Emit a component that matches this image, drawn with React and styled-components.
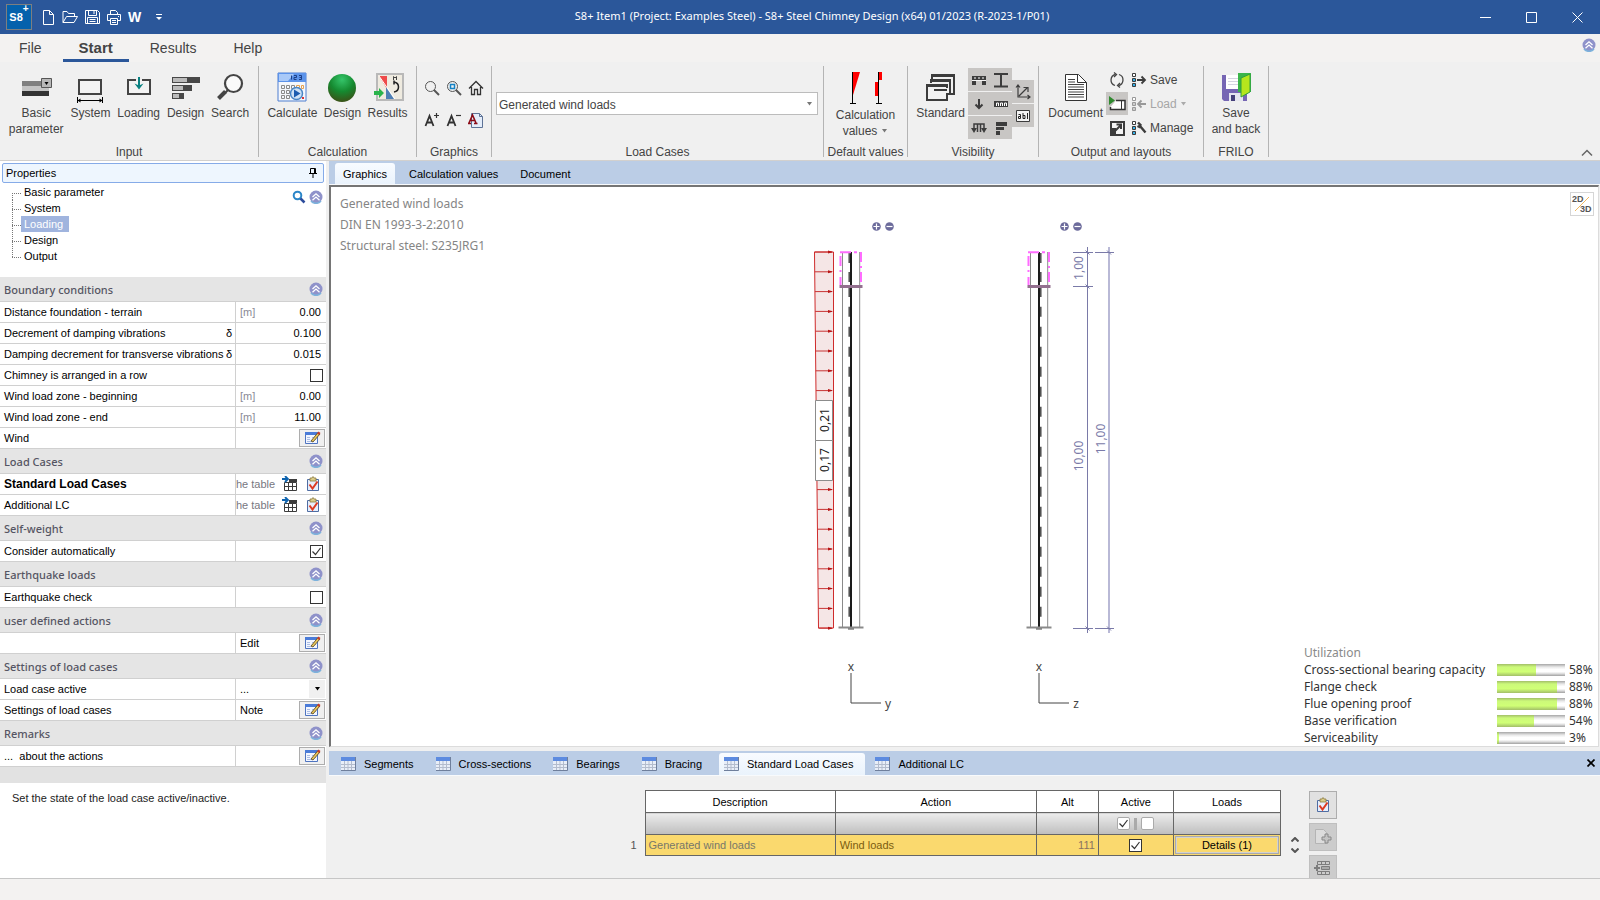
import React, { useState } from 'react';
import styled, { createGlobalStyle, css } from 'styled-components';

const GlobalStyle = createGlobalStyle`
  * {
    box-sizing: border-box;
  }
  body {
    margin: 0;
    background: #f0f0f0;
    color: #000;
    font-family: 'Liberation Sans', Arial, sans-serif;
    font-size: 11px;
  }
  button, input, select {
    font: inherit;
    color: inherit;
    margin: 0;
    padding: 0;
    border: none;
    border-radius: 0;
    background: none;
  }
  svg {
    display: block;
    flex: none;
  }
`;

/* ---------- icons ---------- */

const Svg = ({ w = 16, h = w, children, ...rest }) => (
  <svg width={w} height={h} viewBox={`0 0 ${w} ${h}`} fill='none' aria-hidden='true' {...rest}>
    {children}
  </svg>
);

const PageIcon = () => (
  <Svg stroke='#fff'>
    <path d='M3.5 1.5h6l4 4v10h-10zM9.5 1.5v4h4' />
  </Svg>
);
const FolderIcon = () => (
  <Svg stroke='#fff'>
    <path d='M1 13.5V2.5h4l1.5 2h6v3M1 13.5l3.5-6h11l-3.5 6z' />
  </Svg>
);
const DiskIcon = () => (
  <Svg stroke='#fff'>
    <path d='M1.5 1.5h12l2 2v11h-14zM4.5 1.5v5h8v-5M10 2v3M3.5 14.5v-6h10v6M5.5 10.5h6M5.5 12.5h6' />
  </Svg>
);
const PrinterIcon = () => (
  <Svg stroke='#fff'>
    <path d='M4.5 5.5v-4h5l2 2v2M4.5 11.5h-3v-6h13v6h-3M4.5 9.5h7v6h-7zM6 11.5h4M6 13.5h4M12 7.5h1' />
  </Svg>
);
const MoreIcon = () => (
  <Svg w={8} h={8}>
    <path d='M1 1.5h6' stroke='#fff' />
    <path d='M1 4h6l-3 3z' fill='#fff' />
  </Svg>
);
const ChevronBadge = () => (
  <Svg w={14}>
    <circle cx='7' cy='7' r='6.5' fill='#8f92ca' />
    <path d='M2 11a6.5 6.5 0 0 0 10 0' stroke='#7cb2dc' strokeWidth='1.5' />
    <path d='M3.5 7 7 3.8 10.5 7M3.5 10.3 7 7.1l3.5 3.2' stroke='#fff' strokeWidth='1.3' />
  </Svg>
);

const BasicIcon = () => (
  <Svg w={32}>
    <path d='M2 10h20v6H2z' fill='#808080' />
    <path d='M2 15h27v5H2z' fill='#c4c4c4' />
    <path d='M2 20h27v5H2z' fill='#333' />
    <path d='M21.5 7.5h10v9h-10z' fill='#b8b8b8' stroke='#555' />
    <path d='M24.5 11h4l-2 3z' fill='#000' />
  </Svg>
);
const SystemIcon = () => (
  <Svg w={32}>
    <path d='M5 9h22v14H5z' fill='#f3f3f3' stroke='#444' strokeWidth='2' />
    <path d='M3.5 26v6M28.5 26v6M4 29.5h24' stroke='#000' />
    <path d='m3.5 29.5 3-2v4zM28.5 29.5l-3-2v4z' fill='#000' />
  </Svg>
);
const LoadingIcon = () => (
  <Svg w={32}>
    <path d='M13 9H5v14h22V9h-8' fill='#f3f3f3' stroke='#444' strokeWidth='2' />
    <path d='M16 6v10' stroke='#0a8282' strokeWidth='2' />
    <path d='m11.5 12.5 4.5 6 4.5-6-4.5 2z' fill='#0a8282' />
  </Svg>
);
const BarsIcon = () => (
  <Svg w={32}>
    <path d='M2 6h28v6H2zM2 14h20v6H2zM2 22h12v6H2z' fill='#484848' />
    <path d='M3 7h14v4H3zM3 15h10v4H3zM3 23h6v4H3z' fill='#bbb' />
  </Svg>
);
const SearchIcon = () => (
  <Svg w={32}>
    <circle cx='19.5' cy='12.5' r='8.5' fill='#fafafa' stroke='#444' strokeWidth='2.2' />
    <path d='m14 19-3 3' stroke='#444' strokeWidth='2' />
    <path d='m11.5 20.5-7 7' stroke='#444' strokeWidth='4' />
  </Svg>
);
const CalculateIcon = () => (
  <Svg w={32}>
    <path d='M2 2h28v28H2z' fill='#f4f7fc' stroke='#4f7fd0' />
    <path d='M2 2h28v9H2z' fill='#5c93ea' />
    <path d='M3 3h15l-6 7H3z' fill='#a9c9f8' />
    <path d='M15.5 4.5v4M18 4.5h2.5v2H18v2h2.5M23 4.5h2.5v4H23M23.5 6.5h2' stroke='#1d3f86' />
    <path d='M5.5 14.5h3v3h-3zM10.5 14.5h3v3h-3zM15.5 14.5h3v3h-3zM5.5 19.5h3v3h-3zM10.5 19.5h3v3h-3zM5.5 24.5h3v3h-3zM10.5 24.5h3v3h-3z' stroke='#8a8a8a' />
    <path d='M20.5 14.5h3v2h-3zM25.5 14.5h2v3h-2z' stroke='#e8a14c' />
    <path d='M26 26h2v2h-2z' fill='#d33' />
    <circle cx='20.5' cy='22.5' r='6' fill='#cfe2f6' stroke='#4a86c6' strokeWidth='1.5' />
    <path d='m18 18.5 6.5 4-6.5 4z' fill='#1c5cb0' />
  </Svg>
);
const BallIcon = () => (
  <Svg w={32}>
    <defs>
      <radialGradient id='ball' cx='0.5' cy='0.2' r='0.85'>
        <stop offset='0' stopColor='#35c56a' />
        <stop offset='0.5' stopColor='#158a30' />
        <stop offset='1' stopColor='#3f4a14' />
      </radialGradient>
    </defs>
    <circle cx='16' cy='17' r='14' fill='url(#ball)' />
  </Svg>
);
const ResultsIcon = () => (
  <Svg w={32}>
    <path d='M5 3h26v26H5z' fill='#efebe0' stroke='#b9b9b9' strokeWidth='2' />
    <path d='M7 5h8v13z' fill='#ee4b4b' />
    <path d='M14 16v12h8z' fill='#4e7fb5' />
    <path d='M7 5l16 23' stroke='#fff' />
    <path d='M21.5 9V5.5L23 7l1.5-1.5V9' stroke='#444' />
    <path d='M22 11c6 1 6 9 0 10M22 9.5v4' stroke='#222' strokeWidth='1.5' />
    <path d='M2 20h5v-3l5 5-5 5v-3H2z' fill='#2ab34b' />
  </Svg>
);

const LensIcon = () => (
  <Svg stroke='#555'>
    <circle cx='6.5' cy='6.5' r='5' />
    <path d='m10 10 5 5' strokeWidth='2' />
  </Svg>
);
const LensFitIcon = () => (
  <Svg stroke='#555'>
    <circle cx='6.5' cy='6.5' r='5' />
    <path d='m10 10 5 5' strokeWidth='2' />
    <path d='M4.5 4.5h4v4h-4z' stroke='#1582c5' strokeWidth='1.5' />
  </Svg>
);
const HomeIcon = () => (
  <Svg stroke='#333' strokeWidth='1.3'>
    <path d='m1 8.5 7-7 7 7M3.5 7v7.5h3v-5h3v5h3V7' />
  </Svg>
);
const FontIcon = ({ minus }) => (
  <Svg stroke='#333' strokeWidth='1.8'>
    <path d='m1.5 14 4-10 4 10M3 10.5h5' />
    <path d={minus ? 'M10 3.5h5' : 'M10 3.5h5M12.5 1v5'} strokeWidth='1.2' />
  </Svg>
);
const FontPageIcon = () => (
  <Svg>
    <path d='M3.5 1.5h8l3 3v11h-11z' fill='#e4edfa' stroke='#5d7296' />
    <path d='M11.5 1.5v3h3' stroke='#5d7296' />
    <path d='m1 11 3.5-8L8 11M2.5 8.5h4M0 11.5h3M6 11.5h3.5' stroke='#8c0d18' strokeWidth='1.6' />
  </Svg>
);

const CalcValuesIcon = () => (
  <Svg w={34} h={34}>
    <path d='M3 1h8L4 24z' fill='#f00' />
    <path d='M3.5 1v31M1 32.5h6M29.5 1v31M27 32.5h6' stroke='#000' />
    <path d='M30 1h3v8h-3zM26 11h3v14h-3z' fill='#f00' />
  </Svg>
);
const StandardIcon = () => (
  <Svg w={32} stroke='#3c3c3c' strokeWidth='2'>
    <path d='M7 8V4h22v19h-4M6 5h24' />
    <path d='M2 10h24v20H2z' fill='#f2f2f2' stroke='none' />
    <path d='M6 12V9h19v14h-3M5 10h21M2 14h20v15H2zM2 15h20' />
    <path d='M9 17h14v5H9z' fill='#f2f2f2' stroke='none' />
    <path d='M9 19h13' />
  </Svg>
);
const DocumentIcon = () => (
  <Svg w={32}>
    <path d='M5.5 3.5h13l8 8v18h-21z' fill='#fff' stroke='#333' />
    <path d='M17.5 3.5v8h9' stroke='#333' />
    <path d='M8 13.5h16M8 16h16M8 18.5h16M8 21h16M8 23.5h16M8 26h16M8 8.5h7M8 11h7' stroke='#444' />
  </Svg>
);
const SaveBackIcon = () => (
  <Svg w={32}>
    <path d='M2 4h25v26H4l-2-2z' fill='#7666b4' />
    <path d='M6 4h15v14H6z' fill='#fff' />
    <path d='M8 7.5h11M8 10.5h11M8 13.5h11' stroke='#d5d5e2' />
    <path d='M9 22h14v8H9z' fill='#e6e6f0' />
    <path d='M11 24h4v6h-4z' fill='#46407a' />
    <path d='M18 2h13v19H18z' fill='#3bb54a' />
    <path d='M21 7l9-4v18l-9 5z' fill='#b5e61d' stroke='#2f9e3e' />
  </Svg>
);

const visibilityShapes = {
  supports: (
    <>
      <path d='M1 4h14v4H1z' fill='#3c3c3c' />
      <path d='M3 6h2M7 6h2M11 6h2' stroke='#fff' />
      <path d='M1 9h4v4H1zM11 9h4v4h-4z' fill='#3c3c3c' />
      <path d='M1 8.5h14' stroke='#f4f4f4' />
    </>
  ),
  section: <path d='M1 2h14M1 14.5h14M8 2v12' stroke='#3c3c3c' strokeWidth='2' />,
  arrow: <path d='M8 3v8M4.5 8.5 8 12l3.5-3.5' stroke='#3c3c3c' strokeWidth='2' />,
  ruler: (
    <>
      <path d='M1 5h14v6H1z' fill='#3c3c3c' />
      <path d='M3.5 10V7h2v3M7.5 10V7h2v3M11.5 10V7h2v3' stroke='#fff' />
    </>
  ),
  loads: (
    <>
      <path d='M3 9V4h10v5M6.5 4v8M9.5 4v8' stroke='#3c3c3c' strokeWidth='1.5' />
      <path d='M0 8h6l-3 5zM10 8h6l-3 5z' fill='#3c3c3c' />
    </>
  ),
  bars: <path d='M3 2h11v4H3zM3 7h8v3H3zM3 11h4v4H3z' fill='#3c3c3c' />,
  axes: (
    <path d='M3 1v12h12M1 3.5 3 1l2 2.5M12.5 11l2.5 2-2.5 2M4 12l8-8M8.5 3.5H13V8' stroke='#3c3c3c' strokeWidth='1.2' />
  ),
  text: (
    <>
      <path d='M1.5 2.5h13v11h-13z' fill='#f4f4f4' stroke='#3c3c3c' />
      <path d='M3.5 6.5h2v4h-2v-2h2M8 5v5.5h2v-3H8M12.5 5v6' stroke='#222' />
    </>
  ),
};

const RefreshIcon = () => (
  <Svg stroke='#444' strokeWidth='1.3'>
    <path d='M6 13.5A5.7 5.7 0 0 1 6.5 2.5M10 2.5A5.7 5.7 0 0 1 9.5 13.5' />
    <path d='M5 .5 7.5 2.5 5 5M11 11 8.5 13.5 11 15.5' />
  </Svg>
);
const PlayFrameIcon = () => (
  <Svg w={18} h={16}>
    <path d='M8 4.5h9v9H2.5V11' fill='#fff' stroke='#333' strokeWidth='1.5' />
    <path d='M13.5 5v8' stroke='#333' />
    <path d='M1 0v9l6-4.5z' fill='#2f8a2f' />
  </Svg>
);
const ExpandIcon = () => (
  <Svg>
    <path d='M2 2h13v13H2z' stroke='#3c3c3c' strokeWidth='2' fill='#f4f4f4' />
    <path d='M1 8h6v7H1z' fill='#3c3c3c' />
    <path d='m6.5 10.5 5-5M7.5 4.5H12V9' stroke='#3c3c3c' strokeWidth='2' />
  </Svg>
);
const LayoutIcon = ({ kind }) => {
  const ink = kind === 'load' ? '#999' : '#3c3c3c';
  const fill = kind === 'load' ? '#ccc' : '#36b0e8';
  return (
    <Svg stroke={ink}>
      <path d='M1.5 1.5h3v3h-3z' fill='#fff' />
      <path d='M1.5 6.5h3v3h-3zM1.5 11.5h3v3h-3z' fill={fill} />
      {kind === 'save' && <path d='M6 8h8M10.5 4.5 14 8l-3.5 3.5' strokeWidth='1.8' />}
      {kind === 'load' && <path d='M15 8H7M10.5 4.5 7 8l3.5 3.5' strokeWidth='1.8' />}
      {kind === 'manage' && <path d='M7 2.5 9.5 5 8.5 7 6.5 6M9 6l5.5 6.5' strokeWidth='2.4' />}
    </Svg>
  );
};

const PinIcon = () => (
  <Svg w={10} h={10} stroke='#000'>
    <path d='M2.5 5.5v-5h5v5M6.5 1v4M1 5.5h8M5 6v4' />
  </Svg>
);
const BlueLensIcon = () => (
  <Svg w={14}>
    <circle cx='5.5' cy='5.5' r='3.8' stroke='#2b86c8' strokeWidth='2' />
    <path d='m8.5 8.5 4 4' stroke='#2c4c9c' strokeWidth='2.5' />
  </Svg>
);
const EditIcon = () => (
  <Svg w={18} h={14}>
    <path d='M2.5 1.5h12v11h-12z' fill='#f2f6ff' stroke='#4f74c0' />
    <path d='M2 1h13v3H2z' fill='#4a7bd8' />
    <path d='M4 6.5h3M4 8.5h3M4 10.5h6M9 6.5h4M9 8.5h4' stroke='#a9bce4' />
    <path d='m8 10 7-8.5 2 1.5-7 8z' fill='#e9c65a' stroke='#50401c' strokeWidth='0.8' />
    <path d='m14 2.5 1.5-2 2 1.5-1.5 2z' fill='#c33d2c' />
  </Svg>
);
const ToTableIcon = () => (
  <Svg>
    <path d='M7 3h8v3H7z' fill='#3c3c3c' />
    <path d='M2.5 6.5h12v8h-12zM2.5 10.5h12M6.5 6.5v8M10.5 6.5v8' stroke='#3c3c3c' />
    <path d='M0 3h5M3 0l3 3-3 3' stroke='#0c62ae' strokeWidth='1.8' />
  </Svg>
);
const ClipboardIcon = () => (
  <Svg>
    <path d='M2.5 3.5h11v11h-11z' fill='#e7eefb' stroke='#4f6da3' />
    <path d='M5 2h2l1-1.5L9 2h2v3H5z' fill='#d9ca87' stroke='#8c7a3c' strokeWidth='0.8' />
    <path d='m4.5 8.5 3 4 5-7' stroke='#dc3a22' strokeWidth='2' />
  </Svg>
);
const AddPageIcon = () => (
  <Svg w={18}>
    <path d='M1.5 1.5h8l3 3v11h-11z' fill='#dcdcdc' stroke='#b4b4b4' />
    <path d='M11 6h3v3h3v3h-3v3h-3v-3H8V9h3z' fill='#c4c4c4' stroke='#888' />
  </Svg>
);
const AddRowIcon = () => (
  <Svg w={18} stroke='#7d7d7d'>
    <path d='M3.5 1.5h12v3h-12zM7.5 1.5v3M11.5 1.5v3M3.5 11.5h12v3h-12zM7.5 11.5v3M11.5 11.5v3' />
    <path d='M7.5 6.5h8v3h-8z' fill='#aaa' />
    <path d='M0 8h6M3 5v6' strokeWidth='2' />
  </Svg>
);
const GridIcon = () => (
  <Svg w={15}>
    <path d='M0 1h14v13H0z' fill='#e8eef8' />
    <path d='M0 1h14v4H0z' fill='#5d8be0' />
    <path d='M0 8.5h14M0 11.5h14M3.5 5v9M7 5v9M10.5 5v9' stroke='#b3bccd' />
    <path d='M14.5 1v13.5H0' stroke='#6f7f9c' />
  </Svg>
);
const CaretDown = ({ color = '#777' }) => (
  <Svg w={7} h={4}>
    <path d='M1 0h5L3.5 3.5z' fill={color} />
  </Svg>
);

/* ---------- drawing of the chimney ---------- */

const arrows = Array.from({ length: 20 }, (_, i) => 252 + i * 19.8);
const dashes = [253, 272, 287, ...Array.from({ length: 16 }, (_, i) => 306.7 + i * 20)];

const Chimney = ({ x, side, axis }) => (
  <g transform={`translate(${x} 0)`}>
    <path d='M-8.5 252V627M8.7 252V627' stroke='#8a8a8a' />
    <path d='M0 252V628' stroke='#1c1c1c' strokeWidth='2' />
    {dashes.map((y) => (
      <path key={y} d={`M${side * 1.8} ${y}v10`} stroke='#4a4a4a' strokeWidth='1.5' />
    ))}
    <path d='M-11 252.3h11M3 252.3h3M-10.5 256v10M-10.5 270v2M-10.5 277v8M10 252v10M10 266v2M10 272v10' stroke='#ff6cff' strokeWidth='2' />
    <path d='M-11.5 286.5h23' stroke='#93708f' strokeWidth='3' />
    <path d='M-12.5 627.5h25' stroke='#8a8a8a' strokeWidth='2' />
    <path d='M-3 629h6' stroke='#444' />
    <path d='M0 673v30h30' stroke='#444' />
    <text x='0' y='671' textAnchor='middle' fill='#444'>x</text>
    <text x='37' y='708' textAnchor='middle' fill='#444'>{axis}</text>
    <circle cx='25.5' cy='226.5' r='4.3' fill='#6c6b9b' />
    <path d='M22.5 226.5h6M25.5 223.5v6' stroke='#fff' strokeWidth='1.2' />
    <circle cx='38.5' cy='226.5' r='4.3' fill='#6c6b9b' />
    <path d='M35.5 226.5h6' stroke='#fff' strokeWidth='1.2' />
  </g>
);

const SideText = ({ x, y, fill, children }) => (
  <text transform={`translate(${x} ${y}) rotate(-90)`} textAnchor='middle' fill={fill}>
    {children}
  </text>
);

const ChimneyDrawing = () => (
  <Drawing viewBox='799 187 331 559' role='img' aria-label='Chimney elevation with wind load'>
    <path d='M814.5 252h19v376h-15z' fill='#f5e6e6' stroke='#cf2c2c' />
    {arrows.map((y) => (
      <g key={y}>
        <path d={`M${814.5 + (y - 252) / 94} ${y}H832`} stroke='#c83232' />
        <path d={`M828 ${y - 1.5}l5 1.5-5 1.5z`} fill='#b81414' />
      </g>
    ))}
    <path d='M815.5 400.5h17v40h-17zM815.5 440.5h17v40h-17z' fill='#fff' stroke='#8c8c8c' />
    <SideText x={829} y={420} fill='#222'>0,21</SideText>
    <SideText x={829} y={460} fill='#222'>0,17</SideText>
    <Chimney x={851} side={-1} axis='y' />
    <Chimney x={1039} side={1} axis='z' />
    <path d='M1109 247v386' stroke='#b9b9d6' strokeWidth='2' />
    <path
      d='M1087.5 247v386M1073 252.5h20M1073 286.5h20M1073 628.5h20M1095 252.5h19M1095 628.5h19M1085.5 250.5l4 4M1085.5 284.5l4 4M1085.5 626.5l4 4M1107 250.5l4 4M1107 626.5l4 4'
      stroke='#7a7aa8'
    />
    <SideText x={1083} y={268} fill='#7a7aa8'>1,00</SideText>
    <SideText x={1083} y={456} fill='#7a7aa8'>10,00</SideText>
    <SideText x={1105} y={439} fill='#7a7aa8'>11,00</SideText>
  </Drawing>
);

/* ---------- data ---------- */

const sections = [
  {
    title: 'Boundary conditions',
    rows: [
      { label: 'Distance foundation - terrain', unit: '[m]', value: '0.00' },
      { label: 'Decrement of damping vibrations', symbol: 'δ', value: '0.100' },
      { label: 'Damping decrement for transverse vibrations', symbol: 'δ', value: '0.015' },
      { label: 'Chimney is arranged in a row', type: 'check' },
      { label: 'Wind load zone - beginning', unit: '[m]', value: '0.00' },
      { label: 'Wind load zone - end', unit: '[m]', value: '11.00' },
      { label: 'Wind', type: 'edit' },
    ],
  },
  {
    title: 'Load Cases',
    rows: [
      { label: 'Standard Load Cases', type: 'table', strong: true },
      { label: 'Additional LC', type: 'table' },
    ],
  },
  { title: 'Self-weight', rows: [{ label: 'Consider automatically', type: 'check', checked: true }] },
  { title: 'Earthquake loads', rows: [{ label: 'Earthquake check', type: 'check' }] },
  { title: 'user defined actions', rows: [{ label: '', type: 'edit', text: 'Edit' }] },
  {
    title: 'Settings of load cases',
    rows: [
      { label: 'Load case active', type: 'select' },
      { label: 'Settings of load cases', type: 'edit', text: 'Note' },
    ],
  },
  { title: 'Remarks', rows: [{ label: '...  about the actions', type: 'edit' }] },
];

const tree = ['Basic parameter', 'System', 'Loading', 'Design', 'Output'];

const utilization = [
  { name: 'Cross-sectional bearing capacity', value: 58 },
  { name: 'Flange check', value: 88 },
  { name: 'Flue opening proof', value: 88 },
  { name: 'Base verification', value: 54 },
  { name: 'Serviceability', value: 3 },
];

const tableTabs = ['Segments', 'Cross-sections', 'Bearings', 'Bracing', 'Standard Load Cases', 'Additional LC'];

/* ---------- components ---------- */

const Tool = ({ icon, children }) => (
  <ToolButton type='button'>
    {icon}
    <span>{children}</span>
  </ToolButton>
);

const Ribbon = () => (
  <RibbonBar>
    <Group $width={259}>
      <Tools>
        <Tool icon={<BasicIcon />}>Basic<br />parameter</Tool>
        <Tool icon={<SystemIcon />}>System</Tool>
        <Tool icon={<LoadingIcon />}>Loading</Tool>
        <Tool icon={<BarsIcon />}>Design</Tool>
        <Tool icon={<SearchIcon />}>Search</Tool>
      </Tools>
      <GroupName>Input</GroupName>
    </Group>
    <Group $width={158}>
      <Tools>
        <Tool icon={<CalculateIcon />}>Calculate</Tool>
        <Tool icon={<BallIcon />}>Design</Tool>
        <Tool icon={<ResultsIcon />}>Results</Tool>
      </Tools>
      <GroupName>Calculation</GroupName>
    </Group>
    <Group $width={75}>
      <SmallTools>
        <IconButton type='button' aria-label='Zoom'><LensIcon /></IconButton>
        <IconButton type='button' aria-label='Zoom to window'><LensFitIcon /></IconButton>
        <IconButton type='button' aria-label='Full view'><HomeIcon /></IconButton>
        <IconButton type='button' aria-label='Larger font'><FontIcon /></IconButton>
        <IconButton type='button' aria-label='Smaller font'><FontIcon minus /></IconButton>
        <IconButton type='button' aria-label='Font settings'><FontPageIcon /></IconButton>
      </SmallTools>
      <GroupName>Graphics</GroupName>
    </Group>
    <Group $width={332}>
      <SelectBox>
        <select aria-label='Load case' defaultValue='wind'>
          <option value='wind'>Generated wind loads</option>
        </select>
        <CaretDown />
      </SelectBox>
      <GroupName>Load Cases</GroupName>
    </Group>
    <Group $width={84}>
      <Tools>
        <Tool icon={<CalcValuesIcon />}>
          Calculation
          <Caption>values <CaretDown /></Caption>
        </Tool>
      </Tools>
      <GroupName>Default values</GroupName>
    </Group>
    <Group $width={131}>
      <Tools $flush>
        <Tool icon={<StandardIcon />}>Standard</Tool>
        <Toggles>
          {[['supports', 'arrow', 'loads'], ['section', 'ruler', 'bars'], ['axes', 'text']].map((column) => (
            <ToggleColumn key={column[0]}>
              {column.map((name) => (
                <Toggle key={name} type='button' aria-label={`Show ${name}`} aria-pressed='true'>
                  <Svg>{visibilityShapes[name]}</Svg>
                </Toggle>
              ))}
            </ToggleColumn>
          ))}
        </Toggles>
      </Tools>
      <GroupName>Visibility</GroupName>
    </Group>
    <Group $width={165}>
      <Tools $flush>
        <Tool icon={<DocumentIcon />}>Document</Tool>
        <OutputGrid>
          <IconButton type='button' aria-label='Refresh'><RefreshIcon /></IconButton>
          <LayoutButton type='button'><LayoutIcon kind='save' />Save</LayoutButton>
          <Toggle type='button' aria-label='Preview' aria-pressed='true'><PlayFrameIcon /></Toggle>
          <LayoutButton type='button' disabled><LayoutIcon kind='load' />Load <CaretDown color='#aaa' /></LayoutButton>
          <IconButton type='button' aria-label='Expand'><ExpandIcon /></IconButton>
          <LayoutButton type='button'><LayoutIcon kind='manage' />Manage</LayoutButton>
        </OutputGrid>
      </Tools>
      <GroupName>Output and layouts</GroupName>
    </Group>
    <Group $width={65}>
      <Tools>
        <Tool icon={<SaveBackIcon />}>Save<br />and back</Tool>
      </Tools>
      <GroupName>FRILO</GroupName>
    </Group>
    <CollapseButton type='button' aria-label='Collapse ribbon'>
      <Svg w={12} h={8} stroke='#666' strokeWidth='1.5'><path d='m1 6.5 5-5 5 5' /></Svg>
    </CollapseButton>
  </RibbonBar>
);

const RowControl = ({ row, id }) => {
  const [checked, setChecked] = useState(!!row.checked);
  if (row.type === 'check') {
    return <Check id={id} type='checkbox' checked={checked} onChange={() => setChecked(!checked)} />;
  }
  if (row.type === 'edit') {
    return (
      <>
        <Text>{row.text}</Text>
        <EditButton id={id} type='button' aria-label={`Edit ${row.label}`}><EditIcon /></EditButton>
      </>
    );
  }
  if (row.type === 'table') {
    return (
      <>
        <TableHint>he table</TableHint>
        <RowIcon id={id} type='button' aria-label='Go to table'><ToTableIcon /></RowIcon>
        <RowIcon type='button' aria-label='Check entries'><ClipboardIcon /></RowIcon>
      </>
    );
  }
  if (row.type === 'select') {
    return (
      <PlainSelect>
        <select id={id}><option>...</option></select>
        <span><CaretDown color='#000' /></span>
      </PlainSelect>
    );
  }
  return (
    <>
      <Unit>{row.unit}</Unit>
      <NumberInput id={id} type='text' defaultValue={row.value} />
    </>
  );
};

const Properties = () => (
  <Panel>
    <PanelHead>
      Properties
      <PinIcon />
    </PanelHead>
    <TreeArea>
      <Tree>
        {tree.map((item, i) => (
          <li key={item}>
            <Svg w={9} h={16} stroke='#777' strokeDasharray='1 1'>
              <path d='M0 9.5h9' />
              <path d={`M0.5 ${i === 0 ? 9 : 0}V${i === tree.length - 1 ? 9 : 16}`} />
            </Svg>
            <TreeLink href='#' $active={item === 'Loading'}>{item}</TreeLink>
          </li>
        ))}
      </Tree>
      <TreeTools>
        <BlueLensIcon />
        <ChevronBadge />
      </TreeTools>
    </TreeArea>
    {sections.map((section, s) => (
      <section key={section.title}>
        <SectionHead>
          {section.title}
          <ChevronBadge />
        </SectionHead>
        {section.rows.map((row, r) => (
          <Row key={r}>
            <RowLabel htmlFor={`row-${s}-${r}`} $strong={row.strong}>
              {row.label}
              {row.symbol && <span>{row.symbol}</span>}
            </RowLabel>
            <RowValue>
              <RowControl row={row} id={`row-${s}-${r}`} />
            </RowValue>
          </Row>
        ))}
      </section>
    ))}
    <PanelEnd />
    <Hint>Set the state of the load case active/inactive.</Hint>
  </Panel>
);

const Graphics = () => (
  <Canvas>
    <Notes>
      <p>Generated wind loads</p>
      <p>DIN EN 1993-3-2:2010</p>
      <p>Structural steel: S235JRG1</p>
    </Notes>
    <ChimneyDrawing />
    <CanvasSide>
      <ViewSwitch type='button' aria-label='2D/3D'>
        <Svg w={22} h={22}>
          <path d='M4 18 18 4' stroke='#f0b860' />
          <text x='1' y='9'>2D</text>
          <text x='9' y='19'>3D</text>
        </Svg>
      </ViewSwitch>
      <Utilization>
        <h3>Utilization</h3>
        {utilization.map((item) => (
          <React.Fragment key={item.name}>
            <span>{item.name}</span>
            <Meter>
              <div style={{ width: `${item.value}%` }} />
            </Meter>
            <span>{item.value}%</span>
          </React.Fragment>
        ))}
      </Utilization>
    </CanvasSide>
  </Canvas>
);

const LoadCaseTable = () => {
  const [active, setActive] = useState(true);
  return (
    <TableArea>
      <TableWrap>
        <Table>
          <colgroup>
            <col width='20' />
            <col width='190' />
            <col width='201' />
            <col width='62' />
            <col width='75' />
            <col width='107' />
          </colgroup>
          <thead>
            <tr>
              <td />
              <th>Description</th>
              <th>Action</th>
              <th>Alt</th>
              <th>Active</th>
              <th>Loads</th>
            </tr>
          </thead>
          <tbody>
            <FilterRow>
              <td />
              <td />
              <td />
              <td />
              <td>
                <Filter>
                  <SoftCheck type='checkbox' defaultChecked aria-label='Activate all' />
                  <i />
                  <SoftCheck type='checkbox' aria-label='Deactivate all' />
                </Filter>
              </td>
              <td />
            </FilterRow>
            <DataRow>
              <td>1</td>
              <td>Generated wind loads</td>
              <td>Wind loads</td>
              <td>111</td>
              <td>
                <Check
                  type='checkbox'
                  aria-label='Active'
                  checked={active}
                  onChange={() => setActive(!active)}
                />
              </td>
              <td>
                <DetailsButton type='button'>Details (1)</DetailsButton>
              </td>
            </DataRow>
          </tbody>
        </Table>
        <Spinner>
          <button type='button' aria-label='Previous row'>
            <Svg w={8} h={5} stroke='#555' strokeWidth='2'><path d='m.5 4.5 3.5-3.5 3.5 3.5' /></Svg>
          </button>
          <button type='button' aria-label='Next row'>
            <Svg w={8} h={5} stroke='#555' strokeWidth='2'><path d='m.5 .5 3.5 3.5 3.5-3.5' /></Svg>
          </button>
        </Spinner>
      </TableWrap>
      <TableActions>
        <ActionButton type='button' aria-label='Check entries'><ClipboardIcon /></ActionButton>
        <ActionButton type='button' aria-label='Add' disabled><AddPageIcon /></ActionButton>
        <ActionButton type='button' aria-label='Insert row' disabled><AddRowIcon /></ActionButton>
      </TableActions>
    </TableArea>
  );
};

const App = () => {
  const [view, setView] = useState('Graphics');
  const [tableTab, setTableTab] = useState('Standard Load Cases');
  return (
    <Window>
      <GlobalStyle />
      <TitleBar>
        <QuickAccess>
          <Logo>S8<sup>+</sup></Logo>
          <button type='button' aria-label='New'><PageIcon /></button>
          <button type='button' aria-label='Open'><FolderIcon /></button>
          <button type='button' aria-label='Save'><DiskIcon /></button>
          <button type='button' aria-label='Print'><PrinterIcon /></button>
          <WordButton type='button'>W</WordButton>
          <button type='button' aria-label='Customize'><MoreIcon /></button>
        </QuickAccess>
        <Title>S8+ Item1 (Project: Examples Steel) - S8+ Steel Chimney Design (x64) 01/2023 (R-2023-1/P01)</Title>
        <WindowButton type='button' aria-label='Minimize'>
          <Svg w={11} stroke='#fff'><path d='M0 5.5h11' /></Svg>
        </WindowButton>
        <WindowButton type='button' aria-label='Maximize'>
          <Svg w={11} stroke='#fff'><path d='M.5 .5h10v10H.5z' /></Svg>
        </WindowButton>
        <WindowButton type='button' aria-label='Close'>
          <Svg w={11} stroke='#fff'><path d='m.5 .5 10 10M10.5 .5l-10 10' /></Svg>
        </WindowButton>
      </TitleBar>
      <MenuBar>
        {['File', 'Start', 'Results', 'Help'].map((item) => (
          <MenuTab key={item} type='button' $active={item === 'Start'}>{item}</MenuTab>
        ))}
        <ChevronBadge />
      </MenuBar>
      <Ribbon />
      <Main>
        <Properties />
        <Work>
          <TabStrip>
            {['Graphics', 'Calculation values', 'Document'].map((item) => (
              <Tab key={item} type='button' $active={item === view} onClick={() => setView(item)}>
                {item}
              </Tab>
            ))}
          </TabStrip>
          <Graphics />
          <TabStrip $tables>
            {tableTabs.map((item) => (
              <Tab key={item} type='button' $icon $active={item === tableTab} onClick={() => setTableTab(item)}>
                <GridIcon />
                {item}
              </Tab>
            ))}
            <CloseButton type='button' aria-label='Close'>
              <Svg w={8} h={8} stroke='#000' strokeWidth='1.7'><path d='m.5 .5 7 7M7.5 .5l-7 7' /></Svg>
            </CloseButton>
          </TabStrip>
          <LoadCaseTable />
        </Work>
      </Main>
      <StatusBar />
    </Window>
  );
};

export default App;

/* ---------- styles ---------- */

const uiFont = "'Noto Sans', 'Open Sans', sans-serif";

const Window = styled.div`
  display: flex;
  flex-direction: column;
  height: 100vh;
  overflow: hidden;
`;

const TitleBar = styled.header`
  display: flex;
  align-items: center;
  flex: none;
  height: 34px;
  background: #2b579a;
  color: #fff;
`;

const QuickAccess = styled.div`
  display: flex;
  align-items: center;
  gap: 6px;
  width: 162px;
  padding-left: 6px;
`;

const Logo = styled.div`
  display: flex;
  align-items: center;
  justify-content: center;
  flex: none;
  width: 26px;
  height: 26px;
  margin-right: 2px;
  border: 1px solid #7d7f80;
  background: #0561ac;
  font: bold 11px 'Liberation Sans', Arial, sans-serif;
  sup {
    align-self: flex-start;
    font-size: 10px;
    line-height: 8px;
  }
`;

const WordButton = styled.button`
  font: bold 14px 'Liberation Sans', Arial, sans-serif;
  margin-right: 8px;
`;

const Title = styled.div`
  flex: 1;
  padding-bottom: 3px;
  text-align: center;
  font-family: ${uiFont};
  font-size: 11px;
  white-space: nowrap;
`;

const WindowButton = styled.button`
  display: flex;
  align-items: center;
  justify-content: center;
  width: 46px;
  height: 34px;
`;

const MenuBar = styled.nav`
  display: flex;
  flex: none;
  gap: 5px;
  height: 28px;
  padding: 0 4px 0 3px;
  background: #f3f2f1;
  color: #444;
  svg {
    margin: 4px 0 0 auto;
  }
`;

const MenuTab = styled.button`
  padding: 2px 16px 0;
  border-bottom: 3px solid transparent;
  font-size: 14px;
  ${({ $active }) =>
    $active &&
    css`
      border-color: #2b579a;
      font-size: 15px;
      font-weight: bold;
    `}
`;

const RibbonBar = styled.div`
  display: flex;
  flex: none;
  height: 99px;
  padding: 4px 0 3px;
  border-bottom: 1px solid #d2d0ce;
  background: #f0f0f0;
  color: #444;
  font-size: 12px;
`;

const Group = styled.div`
  display: flex;
  flex-direction: column;
  justify-content: space-between;
  flex: none;
  width: ${({ $width }) => $width}px;
  border-right: 1px solid #b4b4b4;
`;

const GroupName = styled.div`
  text-align: center;
  line-height: 9px;
  white-space: nowrap;
`;

const Tools = styled.div`
  display: flex;
  justify-content: ${({ $flush }) => ($flush ? 'flex-end' : 'space-evenly')};
  gap: ${({ $flush }) => ($flush ? '3px' : '0')};
  padding: ${({ $flush }) => ($flush ? '2px 4px 0 0' : '2px 2px 0')};
`;

const ToolButton = styled.button`
  display: flex;
  flex-direction: column;
  align-items: center;
  align-self: flex-start;
  gap: 2px;
  padding-top: 3px;
  line-height: 16px;
  text-align: center;
`;

const Caption = styled.span`
  display: flex;
  align-items: center;
  justify-content: center;
  gap: 4px;
`;

const SmallTools = styled.div`
  display: grid;
  grid-template-columns: repeat(3, 22px);
  justify-content: center;
  grid-auto-rows: 32px;
  padding-top: 6px;
`;

const IconButton = styled.button`
  display: flex;
  align-items: center;
  justify-content: center;
  min-width: 22px;
`;

const SelectBox = styled.div`
  display: flex;
  align-items: center;
  height: 23px;
  margin: 26px 5px 0 4px;
  padding-right: 4px;
  border: 1px solid #bcbcbc;
  background: #fff;
  select {
    flex: 1;
    padding: 2px 0 0 2px;
    appearance: none;
    outline: none;
  }
`;

const Toggles = styled.div`
  display: flex;
  align-items: center;
`;

const ToggleColumn = styled.div`
  display: flex;
  flex-direction: column;
  gap: 1px;
`;

const Toggle = styled.button`
  display: flex;
  align-items: center;
  justify-content: center;
  width: 22px;
  height: 23px;
  background: #c8c6c4;
`;

const OutputGrid = styled.div`
  display: grid;
  grid-template-columns: 22px 68px;
  grid-auto-rows: 23px;
  column-gap: 3px;
  row-gap: 1px;
`;

const LayoutButton = styled.button`
  display: flex;
  align-items: center;
  gap: 3px;
  &:disabled {
    color: #a6a6a6;
  }
`;

const CollapseButton = styled.button`
  align-self: flex-end;
  margin-left: auto;
  padding: 0 7px 0 0;
`;

const Main = styled.div`
  display: flex;
  flex: 1;
  min-height: 0;
`;

const Panel = styled.aside`
  display: flex;
  flex-direction: column;
  flex: none;
  width: 326px;
  background: #fff;
`;

const PanelHead = styled.div`
  display: flex;
  align-items: center;
  justify-content: space-between;
  height: 20px;
  margin: 2px 2px 0;
  padding: 0 5px 0 3px;
  border: 1px solid #86abe8;
  border-radius: 2px;
  background: #eef6fe;
`;

const TreeArea = styled.div`
  display: flex;
  justify-content: space-between;
  align-items: flex-start;
  height: 94px;
  padding: 1px 3px 0 12px;
`;

const Tree = styled.ul`
  margin: 0;
  padding: 0;
  list-style: none;
  li {
    display: flex;
    height: 16px;
  }
`;

const TreeLink = styled.a`
  padding: 0 6px 0 3px;
  color: ${({ $active }) => ($active ? '#fff' : '#000')};
  background: ${({ $active }) => ($active ? '#a0b4de' : 'none')};
  font-size: 11px;
  line-height: 16px;
  text-decoration: none;
`;

const TreeTools = styled.div`
  display: flex;
  align-items: center;
  gap: 3px;
  padding-top: 6px;
`;

const SectionHead = styled.h2`
  display: flex;
  align-items: center;
  justify-content: space-between;
  height: 25px;
  margin: 0;
  padding: 0 3px 0 4px;
  border-bottom: 1px solid #d0d0d0;
  background: #e5e5e5;
  color: #555563;
  font-family: ${uiFont};
  font-size: 11px;
  font-weight: 500;
`;

const Row = styled.div`
  display: grid;
  grid-template-columns: minmax(0, 1fr) 91px;
  height: 21px;
  border-bottom: 1px solid #d0d0d0;
`;

const RowLabel = styled.label`
  display: flex;
  align-items: center;
  justify-content: space-between;
  padding: 0 3px 0 4px;
  white-space: pre;
  ${({ $strong }) =>
    $strong &&
    css`
      font-size: 12px;
      font-weight: bold;
    `}
`;

const RowValue = styled.div`
  display: flex;
  align-items: center;
  justify-content: flex-end;
  border-left: 1px solid #d0d0d0;
  min-width: 0;
`;

const Unit = styled.span`
  flex: 1;
  padding-left: 4px;
  color: #8a8a96;
`;

const NumberInput = styled.input`
  width: 60px;
  padding-right: 5px;
  text-align: right;
  outline: none;
`;

const Check = styled.input`
  appearance: none;
  width: 13px;
  height: 13px;
  margin-right: 3px;
  border: 1px solid #333;
  background: #fff;
  &:checked {
    background: #fff
      url("data:image/svg+xml,%3Csvg xmlns='http://www.w3.org/2000/svg' viewBox='0 0 11 11'%3E%3Cpath d='M1.5 5.5l3 3 5-6.5' fill='none' stroke='%23333' stroke-width='1.2'/%3E%3C/svg%3E");
  }
`;

const Text = styled.span`
  flex: 1;
  padding-left: 4px;
`;

const EditButton = styled.button`
  display: flex;
  align-items: center;
  justify-content: center;
  width: 26px;
  height: 18px;
  margin-right: 1px;
  border: 1px solid #adadad;
  background: #f0f0f0;
`;

const TableHint = styled.span`
  flex: 1;
  color: #77777f;
  white-space: nowrap;
`;

const RowIcon = styled.button`
  margin-right: 5px;
  & + & {
    margin-left: 2px;
  }
`;

const PlainSelect = styled.div`
  display: flex;
  flex: 1;
  height: 18px;
  padding: 0 1px 0 4px;
  select {
    flex: 1;
    appearance: none;
    outline: none;
  }
  span {
    display: flex;
    align-items: center;
    justify-content: center;
    width: 16px;
    background: #f0f0f0;
  }
`;

const PanelEnd = styled.div`
  height: 16px;
  background: #e2e2e2;
`;

const Hint = styled.p`
  margin: 0;
  padding: 8px 12px;
  line-height: 14px;
  color: #222;
`;

const Work = styled.main`
  display: flex;
  flex-direction: column;
  flex: 1;
  min-width: 0;
  margin-left: 3px;
`;

const TabStrip = styled.div`
  display: flex;
  align-items: flex-end;
  flex: none;
  gap: ${({ $tables }) => ($tables ? 5 : 6)}px;
  height: ${({ $tables }) => ($tables ? 25 : 24)}px;
  padding: 0 5px 0 ${({ $tables }) => ($tables ? 7 : 6)}px;
  border-bottom: 1px solid #f8fafc;
  background: #bbcde6;
`;

const Tab = styled.button`
  display: flex;
  align-items: center;
  gap: 8px;
  height: ${({ $icon }) => ($icon ? 22 : 21)}px;
  padding: ${({ $icon }) => ($icon ? '0 12px 1px 5px' : '0 8px')};
  border-radius: 3px 3px 0 0;
  background: ${({ $active }) => ($active ? 'linear-gradient(#f8fbff, #eaf3fc)' : 'none')};
  white-space: nowrap;
`;

const CloseButton = styled.button`
  align-self: center;
  margin-left: auto;
`;

const Canvas = styled.section`
  display: grid;
  grid-template-columns: 1fr 331px 1fr;
  flex: 1;
  min-height: 0;
  margin: 0 1px 4px 0;
  border-top: 2px solid #757575;
  border-left: 2px solid #757575;
  border-right: 1px solid #dcdcdc;
  border-bottom: 1px solid #dcdcdc;
  background: #fff;
  overflow: hidden;
  font-family: ${uiFont};
`;

const Notes = styled.div`
  padding: 6px 9px;
  color: #858585;
  font-size: 12px;
  line-height: 21px;
  p {
    margin: 0;
  }
`;

const Drawing = styled.svg`
  width: 331px;
  height: 559px;
  fill: none;
  font-family: ${uiFont};
  font-size: 12px;
`;

const CanvasSide = styled.div`
  display: flex;
  flex-direction: column;
  align-items: flex-end;
  justify-content: space-between;
  padding: 5px 4px 0 0;
`;

const ViewSwitch = styled.button`
  border: 1px solid #d6d6d6;
  font: bold 9px 'Liberation Sans', Arial, sans-serif;
  text {
    fill: #555;
  }
`;

const Utilization = styled.div`
  display: grid;
  grid-template-columns: 189px 68px 25px;
  column-gap: 4px;
  align-items: center;
  color: #333;
  font-size: 12px;
  line-height: 17px;
  white-space: nowrap;
  h3 {
    grid-column: 1 / -1;
    margin: 0;
    color: #8a8a8a;
    font-size: 12px;
    font-weight: normal;
  }
`;

const Meter = styled.div`
  height: 12px;
  background: linear-gradient(#a6a6a6, #e8e8e8 25%, #fff 45%, #fff 65%, #ddd 80%, #a0a0a0);
  div {
    height: 100%;
    background: linear-gradient(#a2be68, #ccf97a 25%, #d0ff76 65%, #a2be68);
  }
`;

const TableArea = styled.div`
  display: grid;
  grid-template-columns: 1fr auto 1fr;
  flex: none;
  height: 102px;
  padding: 14px 3px 0 0;
  overflow: hidden;
`;

const TableWrap = styled.div`
  display: flex;
  grid-column: 2;
`;

const Table = styled.table`
  width: 656px;
  height: 66px;
  table-layout: fixed;
  border-collapse: collapse;
  align-self: flex-start;
  th,
  td {
    height: 22px;
    padding: 0 3px;
    border: 1px solid #666;
    font-weight: normal;
  }
  th {
    background: #fff;
  }
  tr > td:first-child {
    border: none;
    border-right: 1px solid #666;
    background: none;
    color: #555;
    padding: 0 8px 0 0;
    text-align: right;
  }
`;

const FilterRow = styled.tr`
  td {
    background: linear-gradient(#ececec, #bebebe);
  }
`;

const DataRow = styled.tr`
  td {
    height: 21px;
    background: #fad96e;
    color: #77776a;
  }
  td:nth-child(3) {
    padding-left: 4px;
    color: #7a5c10;
  }
  td:nth-child(4) {
    text-align: right;
    color: #8a7360;
  }
  td:nth-child(5) {
    text-align: center;
  }
  td:nth-child(6) {
    padding: 1px;
  }
  input {
    display: block;
    margin: 0 auto;
  }
`;

const Filter = styled.div`
  display: flex;
  align-items: center;
  justify-content: center;
  gap: 4px;
  i {
    width: 3px;
    height: 12px;
    background: #aaa;
  }
`;

const SoftCheck = styled(Check)`
  margin: 0;
  border-color: #aaa;
  border-radius: 2px;
`;

const DetailsButton = styled.button`
  display: block;
  width: 100%;
  height: 18px;
  border: 2px solid #d2d2d2;
  outline: 1px solid #aaa;
  outline-offset: -1px;
  background: #fad96e;
  color: #000;
`;

const Spinner = styled.div`
  display: flex;
  flex-direction: column;
  justify-content: flex-end;
  gap: 6px;
  width: 20px;
  height: 65px;
  padding: 0 0 2px 10px;
`;

const TableActions = styled.div`
  display: flex;
  flex-direction: column;
  gap: 4px;
  padding: 1px 0 0 8px;
`;

const ActionButton = styled.button`
  display: flex;
  align-items: center;
  justify-content: center;
  flex: none;
  width: 28px;
  height: 28px;
  border: 1px solid #adadad;
  background: #e1e1e1;
  &:disabled {
    border-color: #bfbfbf;
    background: #cccccc;
  }
`;

const StatusBar = styled.footer`
  flex: none;
  height: 22px;
  border-top: 1px solid #c6c6c6;
  background: #f3f2f1;
`;
